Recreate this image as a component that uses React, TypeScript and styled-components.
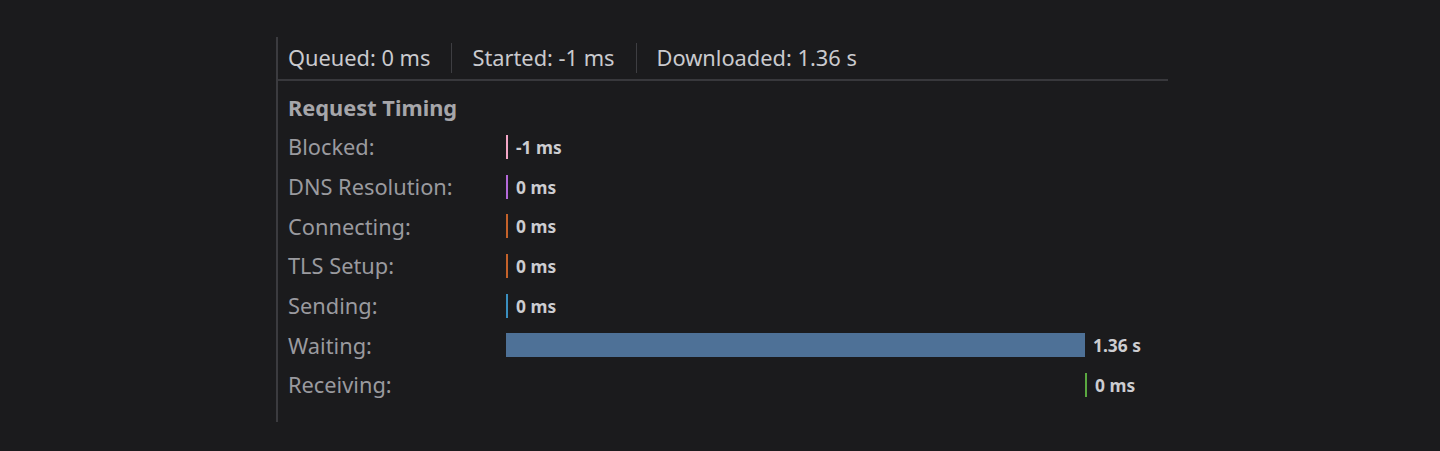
import React from "react";
import styled, { createGlobalStyle } from "styled-components";

const Global = createGlobalStyle`
  html, body {
    margin: 0;
    padding: 0;
    background: #1b1b1d;
  }
  body {
    font-family: "Noto Sans", "Open Sans", sans-serif;
  }
`;

const Page = styled.div`
  padding: 37px 0 0 276px;
  height: 451px;
  box-sizing: border-box;
`;

const Panel = styled.div`
  width: 892px;
  border-left: 2px solid #3b3b3f;
  padding-bottom: 17px;
  box-sizing: border-box;
`;

const Summary = styled.div`
  display: flex;
  align-items: center;
  height: 44px;
  border-bottom: 2px solid #38383c;
  box-sizing: border-box;
  padding-left: 10px;
`;

const SummaryItem = styled.div<{ $first?: boolean; $last?: boolean }>`
  font-size: 21.8px;
  color: #cacace;
  padding: 0 ${(p) => (p.$last ? "0" : "21px")} 0 ${(p) => (p.$first ? "0" : "20px")};
  border-right: ${(p) => (p.$last ? "none" : "1px solid #3e3e42")};
  line-height: 30px;
  white-space: nowrap;
`;

const Section = styled.div`
  padding: 6px 0 0 10px;
`;

const Title = styled.div`
  font-size: 21.8px;
  font-weight: 700;
  color: #a6a6aa;
  height: 40px;
  padding-top: 2px;
  box-sizing: border-box;
  line-height: 38px;
  white-space: nowrap;
`;

const Row = styled.div`
  display: flex;
  align-items: center;
  height: 39.7px;
`;

const Label = styled.div`
  width: 218px;
  flex: none;
  font-size: 21.8px;
  color: #9a9a9f;
  white-space: nowrap;
`;

const Track = styled.div`
  display: flex;
  align-items: center;
  flex: 1;
`;

const Bar = styled.div<{ $color: string }>`
  height: 24px;
  flex: none;
  background: ${(p) => p.$color};
`;

const Value = styled.span`
  margin-left: 8px;
  font-size: 17.4px;
  font-weight: 700;
  color: #cdcdd1;
  white-space: nowrap;
`;

type Timing = { label: string; value: string; color: string; offset: number; width: number };

const timings: Timing[] = [
  { label: "Blocked:", value: "-1 ms", color: "#f3a6c6", offset: 0, width: 2 },
  { label: "DNS Resolution:", value: "0 ms", color: "#b469d9", offset: 0, width: 2 },
  { label: "Connecting:", value: "0 ms", color: "#c5622a", offset: 0, width: 2 },
  { label: "TLS Setup:", value: "0 ms", color: "#c5622a", offset: 0, width: 2 },
  { label: "Sending:", value: "0 ms", color: "#3a8fc0", offset: 0, width: 2 },
  { label: "Waiting:", value: "1.36 s", color: "#4e7197", offset: 0, width: 579 },
  { label: "Receiving:", value: "0 ms", color: "#5aa840", offset: 579, width: 2 },
];

export default function App() {
  return (
    <>
      <Global />
      <Page>
        <Panel>
          <Summary>
            <SummaryItem $first>Queued: 0 ms</SummaryItem>
            <SummaryItem>Started: -1 ms</SummaryItem>
            <SummaryItem $last>Downloaded: 1.36 s</SummaryItem>
          </Summary>
          <Section>
            <Title>Request Timing</Title>
            {timings.map((t) => (
              <Row key={t.label}>
                <Label>{t.label}</Label>
                <Track style={{ paddingLeft: t.offset }}>
                  <Bar $color={t.color} style={{ width: t.width }} />
                  <Value>{t.value}</Value>
                </Track>
              </Row>
            ))}
          </Section>
        </Panel>
      </Page>
    </>
  );
}
